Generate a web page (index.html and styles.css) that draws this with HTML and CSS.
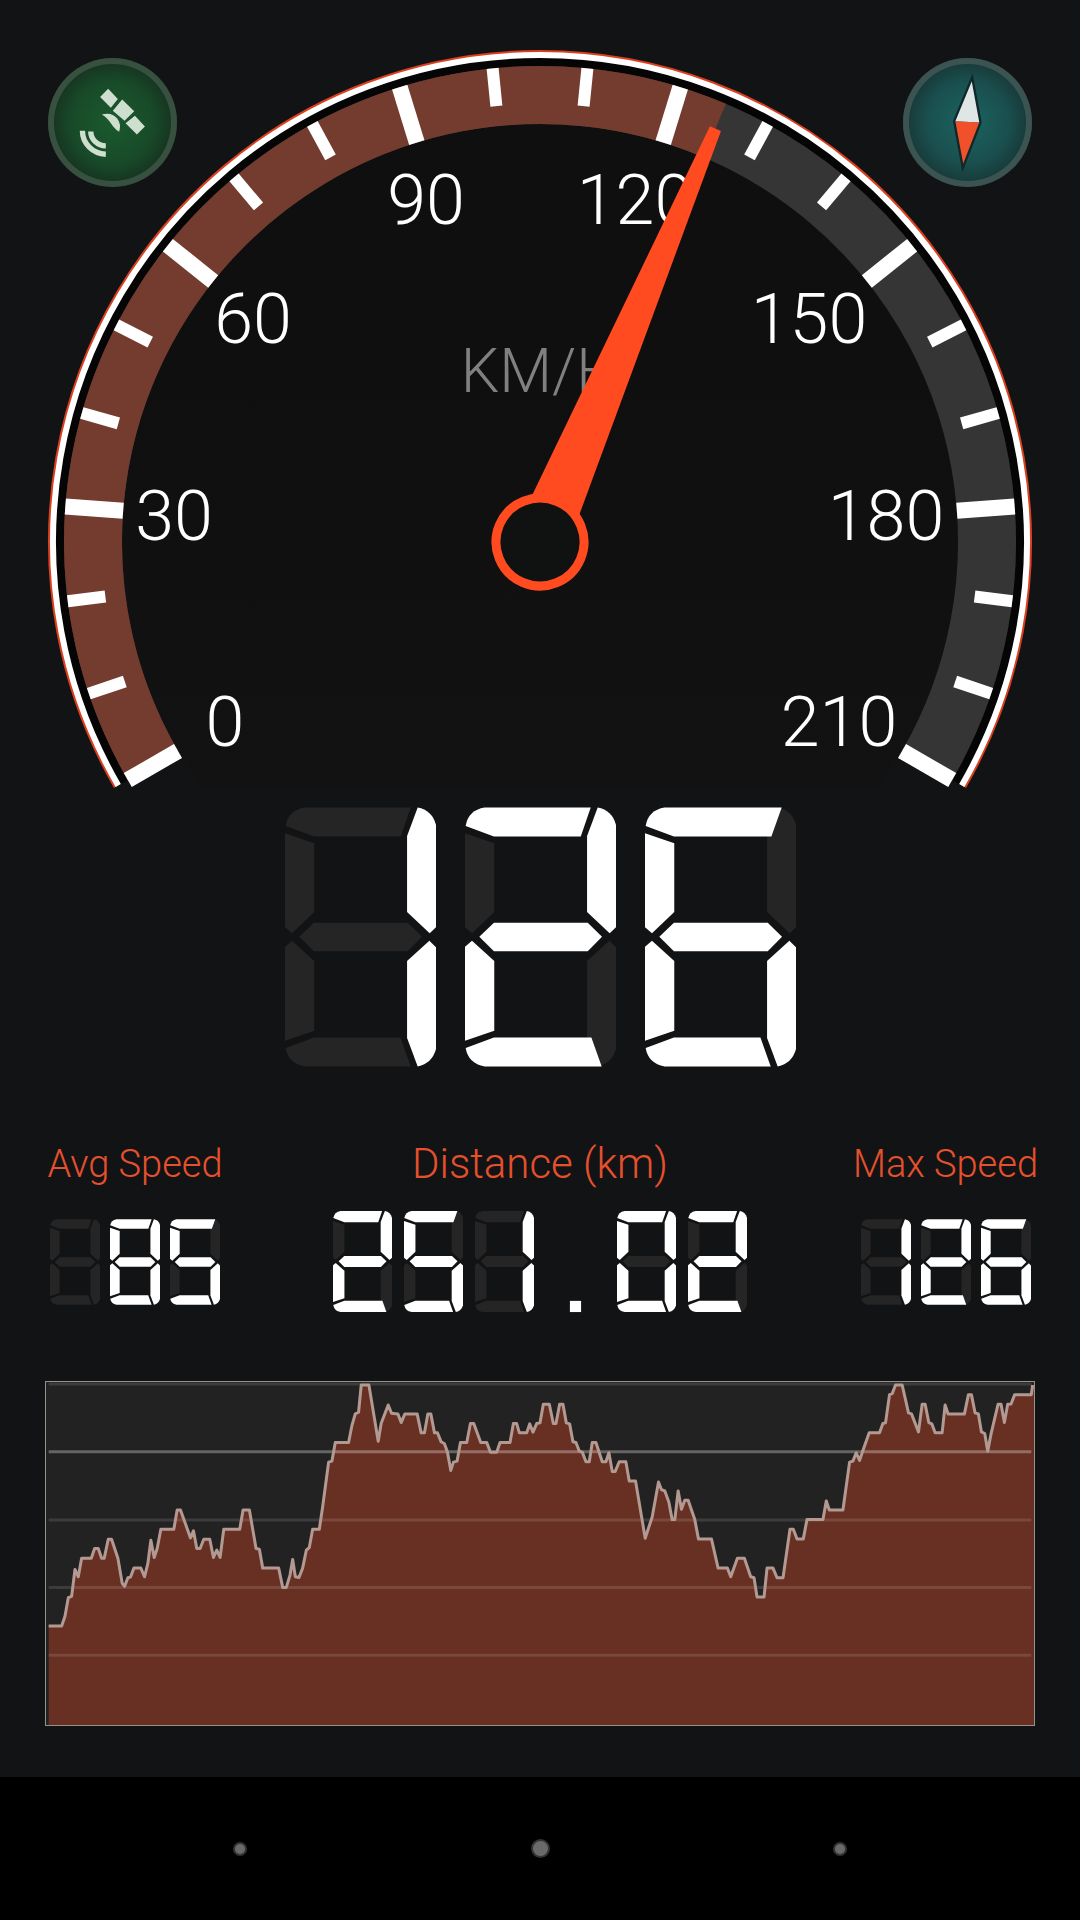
FILE: index.html
```html
<!DOCTYPE html>
<html lang="en">
<head>
  <meta charset="UTF-8" />
  <meta name="viewport" content="width=device-width, initial-scale=1.0" />
  <title>Speedometer</title>
  <link rel="stylesheet" href="styles.css">
</head>
<body>
  <main>
    <section class="dial">
      <svg class="gauge" viewBox="0 0 1080 790" role="img" aria-label="Speed gauge">
        <defs>
          <linearGradient id="faceFade" x1="0" y1="0" x2="0" y2="1">
            <stop offset="0.3" stop-color="#0f0f10" />
            <stop offset="0.78" stop-color="#121213" />
          </linearGradient>
        </defs>
        <circle cx="540" cy="542" r="418" fill="url(#faceFade)" />
        <g id="arcs"></g>
        <g id="ticks"></g>
        <g class="numbers">
          <text x="225" y="746">0</text>
          <text x="174" y="540">30</text>
          <text x="253" y="343">60</text>
          <text x="426" y="224">90</text>
          <text x="635" y="224">120</text>
          <text x="809" y="343">150</text>
          <text x="886" y="540">180</text>
          <text x="839" y="746">210</text>
        </g>
        <text class="unit" x="540" y="392">KM/H</text>
        <g id="needle" transform="translate(540 542)">
          <path class="pointer" d="M-26 -30 L-6 -449 H6 L26 -30 Z" />
          <circle class="hub" r="44" />
        </g>
      </svg>

      <button class="badge gps" aria-label="GPS status">
        <svg viewBox="-193 -193 386 386">
          <g transform="translate(-248 -248)">
            <path d="M235 147 L264 178 L243 204 L211 172 Z" />
            <path d="M277 179 L313 214 L284 243 L249 213 Z" />
            <path d="M315 228 L345 260 L321 284 L287 250 Z" />
            <path d="M216 224 Q246 216 262 236 Q275 252 268 276 Q260 272 250 260 Q232 232 216 224 Z" />
            <path class="wave" d="M158 273 A72 70 0 0 0 228 343" />
            <path class="wave" d="M183 275 A45 43 0 0 0 228 318" />
          </g>
        </svg>
      </button>

      <button class="badge compass" aria-label="Compass">
        <svg viewBox="-193 -193 386 386">
          <g transform="translate(-803 -247)">
            <path class="north" d="M817 112 L765 243 L840 247 Z" />
            <path class="south" d="M765 243 L840 247 L789 383 Z" />
            <path class="edge" d="M817 112 L763 243 L789 383 L842 247 Z" />
          </g>
        </svg>
      </button>
    </section>

    <div class="lcd speed" data-value="126" data-size="3"></div>

    <section class="stats">
      <div class="stat">
        <h2>Avg Speed</h2>
        <div class="lcd small" data-value="85" data-size="3"></div>
      </div>
      <div class="stat wide">
        <h2>Distance (km)</h2>
        <div class="lcd medium" data-value="251.02" data-size="6"></div>
      </div>
      <div class="stat">
        <h2>Max Speed</h2>
        <div class="lcd small" data-value="126" data-size="3"></div>
      </div>
    </section>

    <svg class="chart" viewBox="46 34 2968 1032" preserveAspectRatio="none" role="img" aria-label="Speed history">
      <polygon id="area" />
      <g class="grid">
        <path d="M54 40 H3006" />
        <path class="strong" d="M54 244 H3006" />
        <path d="M54 449 H3006" />
        <path d="M54 652 H3006" />
        <path d="M54 856 H3006" />
      </g>
      <polyline id="line" />
    </svg>
  </main>

  <nav>
    <button aria-label="Back"><span class="dot"></span></button>
    <button aria-label="Home"><span class="dot home"></span></button>
    <button aria-label="Recent apps"><span class="dot"></span></button>
  </nav>

  <script src="script.js"></script>
</body>
</html>
```
FILE: styles.css
```css
body, html {
  margin: 0;
  padding: 0;
  font-family: Roboto, "Liberation Sans", sans-serif;
  font-weight: 300;
  color: white;
  background-color: #121314;
}

body {
  display: flex;
  flex-direction: column;
  min-height: 100vh;
}

button {
  border: none;
  padding: 0;
  background: none;
  cursor: pointer;
}

.dial {
  position: relative;
}

.gauge {
  display: block;
  width: 100%;
}

.gauge path {
  fill: none;
}

.gauge .rim-glow {
  stroke: #d8401f;
  stroke-width: 4;
}

.gauge .rim {
  stroke: #fff;
  stroke-width: 6;
}

.gauge .rim-gap {
  stroke: #050505;
  stroke-width: 8;
}

.gauge .band {
  stroke: #353535;
  stroke-width: 58;
}

.gauge .band.filled {
  stroke: #743b2f;
}

#ticks {
  fill: #fff;
}

.numbers {
  fill: #fff;
  font-size: 70px;
  text-anchor: middle;
}

.unit {
  fill: #808080;
  font-size: 61px;
  text-anchor: middle;
}

.gauge .pointer {
  fill: #ff4b1f;
}

.hub {
  fill: #101111;
  stroke: #ff4b1f;
  stroke-width: 9;
}

/* round buttons over the corners of the dial */
.badge {
  position: absolute;
  top: 58px;
  width: 129px;
  height: 129px;
  box-sizing: border-box;
  border-radius: 50%;
}

.badge svg {
  display: block;
  width: 100%;
  height: 100%;
}

.gps {
  left: 48px;
  background: radial-gradient(circle, #1a5a2e 0%, #184a29 45%, #163320 68%);
  box-shadow: inset 0 0 0 6px #38503f;
}

.compass {
  right: 48px;
  background: radial-gradient(circle, #1a6460 0%, #1a4f4e 45%, #183838 68%);
  box-shadow: inset 0 0 0 6px #3b5351;
}

.gps path {
  fill: #cfdfcf;
}

.gps .wave {
  fill: none;
  stroke: #cfdfcf;
  stroke-width: 16;
}

.north {
  fill: #dfe7e6;
}

.south {
  fill: #f0502a;
}

.edge {
  fill: none;
  stroke: #10282a;
  stroke-width: 7;
}

.lcd {
  display: flex;
  justify-content: center;
}

.lcd .on {
  fill: #fff;
}

.lcd .off {
  fill: #252525;
}

.speed {
  gap: 29px;
  margin-top: 17px;
}

.speed svg {
  width: 151px;
  height: 260px;
}

.small {
  gap: 10px;
}

.small svg {
  width: 50px;
  height: 86px;
}

.medium {
  gap: 12px;
}

.medium svg {
  width: 59px;
  height: 103px;
}

.stats {
  display: grid;
  grid-template-columns: 184px 1fr 184px;
  margin: 73px 43px 0;
}

.stat {
  display: grid;
  grid-template-rows: 48px 103px;
  gap: 22px;
  align-items: center;
}

.stat h2 {
  margin: 0;
  font-size: 38px;
  line-height: 48px;
  font-weight: 300;
  text-align: center;
  white-space: nowrap;
  color: #e5502d;
}

.stat.wide h2 {
  font-size: 42px;
}

.chart {
  display: block;
  width: calc(100% - 90px);
  height: 345px;
  margin: 68px 45px 51px;
  box-sizing: border-box;
  border: 1px solid #94908c;
  background: #222222;
}

#area {
  fill: #682f23;
}

#line {
  fill: none;
  stroke: #b29a92;
  stroke-width: 3;
  stroke-linejoin: round;
  vector-effect: non-scaling-stroke;
}

.grid path {
  stroke: #fff;
  stroke-opacity: 0.12;
  stroke-width: 3;
  vector-effect: non-scaling-stroke;
}

.grid .strong {
  stroke-opacity: 0.3;
}

nav {
  display: grid;
  grid-template-columns: 1fr 1fr 1fr;
  flex: 1;
  min-height: 143px;
  padding: 0 90px;
  background: #000;
}

nav button {
  display: flex;
  justify-content: center;
  align-items: center;
}

.dot {
  width: 10px;
  height: 10px;
  border: 2px solid #333;
  border-radius: 50%;
  background: #6a6a6a;
}

.dot.home {
  width: 15px;
  height: 15px;
}
```
FILE: script.js
```js
const CX = 540, CY = 542;
const MAX = 210;
const NEEDLE_ANGLE = 23;

// angle in degrees, 0 is straight up
function point(angle, r) {
  const a = angle * Math.PI / 180;
  return (CX + r * Math.sin(a)).toFixed(2) + " " + (CY - r * Math.cos(a)).toFixed(2);
}

function arc(cls, r, from, to) {
  const large = to - from > 180 ? 1 : 0;
  return `<path class="${cls}" d="M${point(from, r)} A${r} ${r} 0 ${large} 1 ${point(to, r)}" />`;
}

function drawGauge() {
  document.getElementById("arcs").innerHTML =
    arc("rim-glow", 490, -120, 120) +
    arc("rim-gap", 480, -120, 120) +
    arc("rim", 487, -120, 120) +
    arc("band", 447, -120, 120) +
    arc("band filled", 447, -120, NEEDLE_ANGLE);

  let ticks = "";
  for (let v = 0; v <= MAX; v += 10) {
    const angle = -120 + v * 240 / MAX;
    const major = v % 30 === 0;
    const w = major ? 16 : 12;
    const h = major ? 58 : 38;
    ticks += `<rect x="${CX - w / 2}" y="${CY - 476}" width="${w}" height="${h}" transform="rotate(${angle} ${CX} ${CY})" />`;
  }
  document.getElementById("ticks").innerHTML = ticks;

  document.getElementById("needle").setAttribute("transform", `translate(${CX} ${CY}) rotate(${NEEDLE_ANGLE})`);
}

const SHAPES = {
  a: "M2 55 Q10 8 59 0 H378 L348 87 H87 Z",
  b: "M399 0 Q442 8 454 52 V360 L435 378 L367 314 V85 Z",
  c: "M434 400 L454 420 V726 Q442 770 399 778 L367 693 V461 Z",
  d: "M2 723 Q10 770 59 778 H378 L347 691 H87 Z",
  e: "M0 418 L21 400 L88 461 V671 L0 701 Z",
  f: "M0 77 L88 107 V314 L21 378 L0 360 Z",
  g: "M87 346 H369 L412 388 L369 432 H87 L43 388 Z"
};

// top and bottom bars run further right when the bar beside them is off
const LONG_A = "M2 55 Q10 8 59 0 H411 L380 87 H87 Z";
const LONG_D = "M2 723 Q10 770 59 778 H411 L380 691 H87 Z";

const DIGITS = {
  " ": "", 0: "abcdef", 1: "bc", 2: "abdeg", 3: "abcdg", 4: "bcfg",
  5: "acdfg", 6: "acdefg", 7: "abc", 8: "abcdefg", 9: "abcdfg"
};

function digit(ch) {
  if (ch === ".") {
    return `<svg viewBox="0 0 454 778"><rect class="on" x="184" y="692" width="86" height="86" /></svg>`;
  }
  const lit = DIGITS[ch];
  let off = "", on = "";
  for (const s in SHAPES) {
    if (!lit.includes(s)) {
      off += `<path class="off" d="${SHAPES[s]}" />`;
      continue;
    }
    let d = SHAPES[s];
    if (s === "a" && !lit.includes("b")) d = LONG_A;
    if (s === "d" && !lit.includes("c")) d = LONG_D;
    on += `<path class="on" d="${d}" />`;
  }
  return `<svg viewBox="0 0 454 778">${off}${on}</svg>`;
}

function drawDisplays() {
  document.querySelectorAll(".lcd").forEach(el => {
    const value = el.dataset.value;
    el.setAttribute("role", "img");
    el.setAttribute("aria-label", value);
    el.innerHTML = value.padStart(Number(el.dataset.size), " ").split("").map(digit).join("");
  });
}

const HISTORY = `54,768 93,768 103,739 113,683 123,679 133,598 143,620 153,564 182,564 192,535 203,535 213,564 221,564
233,507 243,507 262,564 275,640 282,649 292,623 300,621 310,594 331,594 342,620 352,580 361,510 371,562 380,535 391,477
430,477 440,419 450,419 480,503 489,482 499,535 509,535 520,507 538,507 549,562 559,540 569,562 580,477 628,477 638,419
657,419 677,535 687,537 697,594 745,594 757,652 768,652 779,615 787,568 795,620 806,622 817,594 828,540 837,532 847,477
867,477 877,410 895,275 905,272 915,216 955,216 965,165 975,130 985,125 993,43 1016,43 1044,212 1053,158 1074,103
1084,128 1103,130 1113,156 1124,130 1161,130 1173,187 1183,187 1193,130 1202,130 1213,187 1222,187 1233,214 1243,220
1252,245 1262,300 1270,275 1281,272 1291,216 1310,216 1321,159 1331,159 1352,216 1370,216 1381,245 1400,245 1410,216
1440,216 1450,159 1460,159 1468,187 1490,187 1499,160 1509,185 1520,159 1530,157 1540,101 1558,101 1570,159 1578,159
1589,101 1599,101 1609,157 1619,160 1629,214 1638,216 1648,242 1657,245 1668,274 1678,274 1687,216 1698,216 1717,274
1728,274 1737,247 1747,303 1756,303 1768,274 1788,274 1798,332 1817,332 1846,504 1867,440 1886,335 1895,358 1905,362
1917,395 1927,448 1935,448 1945,362 1955,417 1965,390 1975,390 1995,448 2006,506 2045,506 2065,594 2093,594 2103,620
2123,564 2144,564 2163,620 2173,623 2182,681 2203,681 2212,594 2230,594 2242,623 2260,623 2281,477 2291,477 2302,506
2321,506 2332,448 2380,448 2390,392 2399,419 2440,419 2460,275 2470,272 2480,247 2490,270 2500,240 2519,187 2550,187
2560,159 2568,157 2580,72 2588,69 2598,43 2618,43 2637,127 2646,130 2667,184 2678,101 2687,101 2698,156 2707,160
2717,187 2738,187 2747,103 2756,130 2805,130 2817,72 2826,72 2837,127 2847,130 2856,184 2866,189 2875,242 2885,190
2906,101 2915,101 2925,156 2935,101 2945,100 2956,72 3006,72 3010,43`;

function drawChart() {
  document.getElementById("line").setAttribute("points", HISTORY);
  document.getElementById("area").setAttribute("points", "54,1066 " + HISTORY + " 3014,43 3014,1066");
}

drawGauge();
drawDisplays();
drawChart();
```
